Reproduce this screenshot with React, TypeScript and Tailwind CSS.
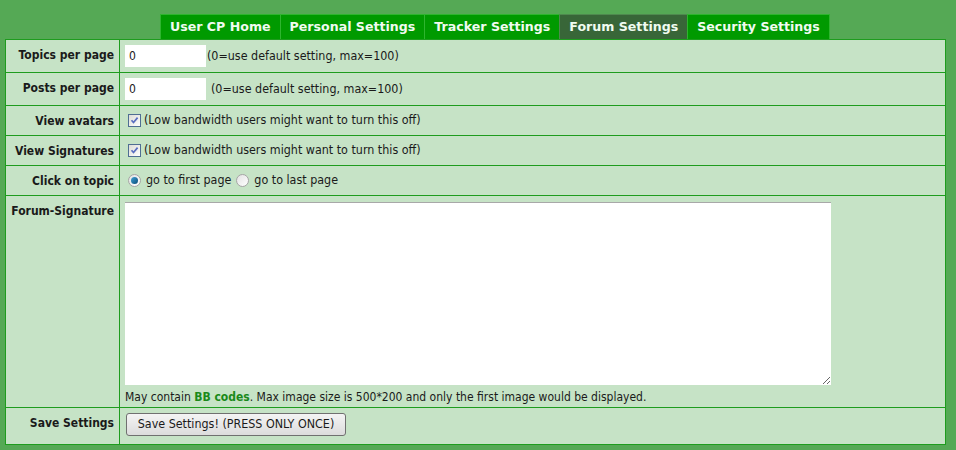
import React, { useState } from 'react';

const tabs = ['User CP Home', 'Personal Settings', 'Tracker Settings', 'Forum Settings', 'Security Settings'];

const CheckBox: React.FC<{ checked: boolean; onClick: () => void }> = ({ checked, onClick }) => (
  <span
    onClick={onClick}
    className="inline-flex items-center justify-center w-[13px] h-[13px] border border-[#4f6e93] bg-gradient-to-br from-[#dcdcd6] to-white mr-[3px] shrink-0 cursor-pointer"
  >
    {checked && (
      <svg width="9" height="9" viewBox="0 0 9 9">
        <path d="M1.5 4.2 L3.5 6.5 L7.6 1.6" fill="none" stroke="#5a6ec0" strokeWidth="1.7" />
      </svg>
    )}
  </span>
);

const Radio: React.FC<{ checked: boolean; onClick: () => void }> = ({ checked, onClick }) => (
  <span
    onClick={onClick}
    className="inline-flex items-center justify-center w-[13px] h-[13px] rounded-full border border-[#a4a4a4] bg-gradient-to-br from-[#e2e2e2] to-white mr-[5px] shrink-0 cursor-pointer"
  >
    {checked && <span className="w-[7px] h-[7px] rounded-full bg-gradient-to-br from-[#3fa3d8] to-[#0b4c78]" />}
  </span>
);

const Label: React.FC<{ children: React.ReactNode }> = ({ children }) => (
  <td className="w-[114px] border border-[#1e9c1e] align-top text-right pr-[5px] pt-[6px] font-bold text-[12px] text-[#1a1a1a]">
    {children}
  </td>
);

const App: React.FC = () => {
  const [avatars, setAvatars] = useState(true);
  const [sigs, setSigs] = useState(true);
  const [firstPage, setFirstPage] = useState(true);

  return (
    <div className="w-[956px] h-[450px] bg-[#55a955] overflow-hidden" style={{ fontFamily: 'Tahoma, "DejaVu Sans Condensed", "DejaVu Sans", sans-serif' }}>
      {/* Tabs */}
      <div className="flex pl-[160px] pt-[14px]">
        {tabs.map((t) => {
          const active = t === 'Forum Settings';
          return (
            <div
              key={t}
              className={`h-[25px] px-[9px] -mr-[1px] flex items-center border border-b-0 text-[12.6px] font-bold text-[#f0fbf0] ${
                active ? 'bg-[#386638] border-[#4f8a4f]' : 'bg-[#009a00] border-[#2fb52f]'
              }`}
              style={{ fontFamily: '"DejaVu Sans", Verdana, sans-serif' }}
            >
              {t}
            </div>
          );
        })}
      </div>

      {/* Settings table */}
      <table className="ml-[5px] w-[941px] border-collapse bg-[#c6e3c6] border border-[#1e9c1e] text-[12.4px] text-[#1a1a1a]">
        <tbody>
          <tr className="h-[33px]">
            <Label>Topics per page</Label>
            <td className="border border-[#1e9c1e] pl-[5px]">
              <div className="flex items-center">
                <input defaultValue="0" className="w-[81px] h-[22px] bg-white px-[4px] text-[12px] outline-none" />
                <span className="ml-[1px]">(0=use default setting, max=100)</span>
              </div>
            </td>
          </tr>
          <tr className="h-[33px]">
            <Label>Posts per page</Label>
            <td className="border border-[#1e9c1e] pl-[5px]">
              <div className="flex items-center">
                <input defaultValue="0" className="w-[81px] h-[22px] bg-white px-[4px] text-[12px] outline-none" />
                <span className="ml-[5px]">(0=use default setting, max=100)</span>
              </div>
            </td>
          </tr>
          <tr className="h-[30px]">
            <Label>View avatars</Label>
            <td className="border border-[#1e9c1e] pl-[8px]">
              <div className="flex items-center">
                <CheckBox checked={avatars} onClick={() => setAvatars(!avatars)} />
                (Low bandwidth users might want to turn this off)
              </div>
            </td>
          </tr>
          <tr className="h-[30px]">
            <Label>View Signatures</Label>
            <td className="border border-[#1e9c1e] pl-[8px]">
              <div className="flex items-center">
                <CheckBox checked={sigs} onClick={() => setSigs(!sigs)} />
                (Low bandwidth users might want to turn this off)
              </div>
            </td>
          </tr>
          <tr className="h-[30px]">
            <Label>Click on topic</Label>
            <td className="border border-[#1e9c1e] pl-[8px]">
              <div className="flex items-center">
                <Radio checked={firstPage} onClick={() => setFirstPage(true)} />
                <span className="mr-[5px]">go to first page</span>
                <Radio checked={!firstPage} onClick={() => setFirstPage(false)} />
                go to last page
              </div>
            </td>
          </tr>
          <tr className="h-[212px]">
            <Label>Forum-Signature</Label>
            <td className="border border-[#1e9c1e] pl-[5px] pt-[6px] align-top">
              <textarea className="block w-[706px] h-[183px] bg-white border-t border-[#a8a8a8] outline-none resize" />
              <div className="mt-[3px] text-[12px]">
                May contain <span className="font-bold text-[#1a8a1a]">BB codes</span>. Max image size is 500*200 and only the first image would be displayed.
              </div>
            </td>
          </tr>
          <tr className="h-[37px]">
            <Label>Save Settings</Label>
            <td className="border border-[#1e9c1e] pl-[6px] align-top pt-[5px]">
              <button className="w-[220px] h-[23px] rounded-[3px] border border-[#707070] bg-gradient-to-b from-[#f4f4f4] to-[#dcdcdc] text-[12.4px] text-[#1a1a1a]">
                Save Settings! (PRESS ONLY ONCE)
              </button>
            </td>
          </tr>
        </tbody>
      </table>
    </div>
  );
};

export default App;
